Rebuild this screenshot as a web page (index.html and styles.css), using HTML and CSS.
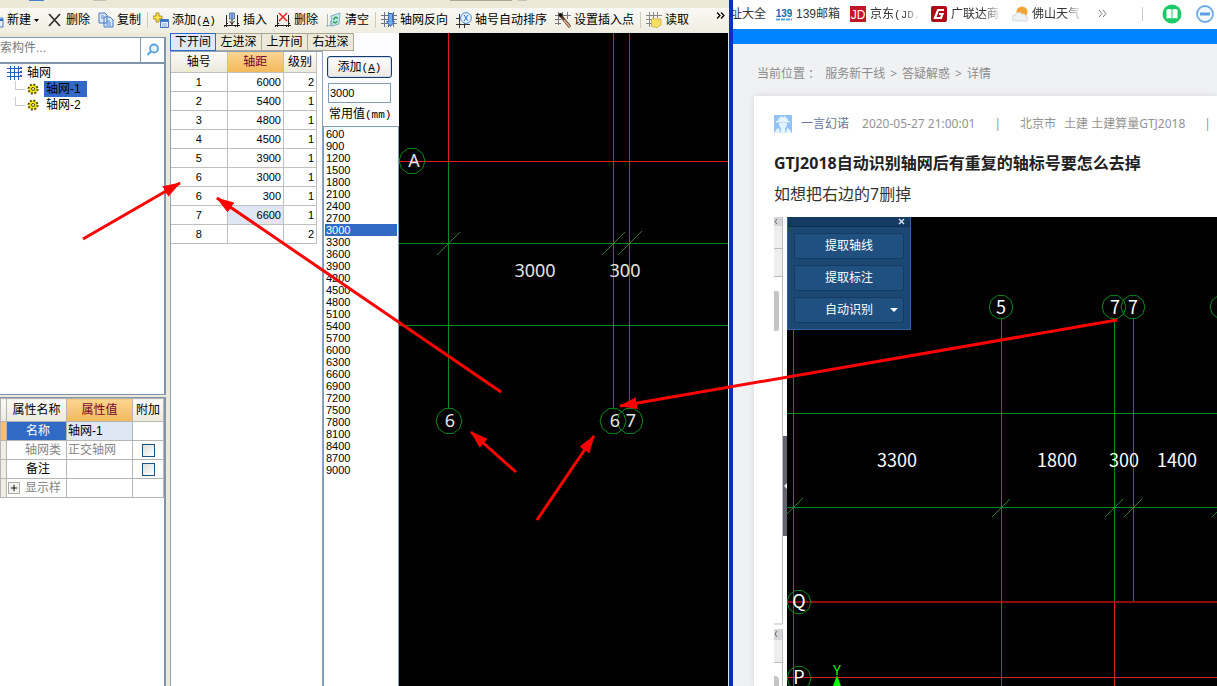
FILE: index.html
```html
<!DOCTYPE html>
<html lang="zh-CN">
<head>
<meta charset="utf-8">
<title>轴网</title>
<link rel="stylesheet" href="styles.css">
</head>
<body>
<div class="desktop">
  <section class="app">
    <div class="upper-strip"><i class="strip-blue"></i><i class="strip-grey"></i><i class="strip-combo"></i><i class="strip-dot"></i></div>
    <div class="toolbar">
      <button class="tool"><svg class="icon-cut" viewBox="0 0 4 16"><path d="M0 6h3v9H0" fill="#e8f1ff" stroke="#4a78c0"/><path d="M0 7h3v2H0z" fill="#356bc4"/></svg>新建<svg class="caret" viewBox="0 0 5 3"><path d="M0 0h5L2.500 3z"/></svg></button>
      <button class="tool"><svg class="icon" viewBox="0 0 16 16"><path d="M2 2l11 12M13 2L2 14" stroke="#333" stroke-width="1.800" fill="none"/></svg>删除</button>
      <button class="tool"><svg class="icon" viewBox="0 0 16 16"><path d="M1 1h6l2 2v8H1zM6 5h6l3 3v7H6z" fill="#d8e8fc" stroke="#4778bd"/><path d="M3 4h3M3 6h3M8 9h4M8 11h5M8 13h5" stroke="#5b90dc"/></svg>复制</button>
      <i class="sep"></i>
      <button class="tool"><svg class="icon" viewBox="0 0 16 16"><path d="M3 1h3v3h3v3H6v3H3V7H0V4h3z" fill="#ffe04d" stroke="#9a7c18" stroke-width=".8"/><path d="M7.500 7.500h8v8h-8z" fill="#e7f0ff" stroke="#4775bc"/><path d="M8 8h7v2H8z" fill="#3f78cf"/><path d="M9 12h5M9 14h5" stroke="#8aa9d8"/></svg><span>添加<span class="mono">(<u>A</u>)</span></span></button>
      <button class="tool"><svg class="icon" viewBox="0 0 16 16"><path d="M2.500 3v12M13.500 3v12M0 13.500h16M8 6v8" stroke="#222"/><path d="M5.500 1h5v6h-5z" fill="#9fc2f2" stroke="#55749e"/><path d="M8 2v4" stroke="#204a9a"/><path d="M5.500 9L8 12l2.500-3M0 15l4-4M11 15l4-4" fill="none" stroke="#222"/></svg>插入</button>
      <button class="tool"><svg class="icon" viewBox="0 0 16 16"><path d="M2.500 3v12M13.500 3v12M0 13.500h16M0 15l4-4M11 15l4-4" stroke="#222"/><path d="M4 1l8 8M12 1L4 9" stroke="#e02a2a" stroke-width="1.600"/></svg>删除</button>
      <button class="tool"><svg class="icon" viewBox="0 0 16 16"><path d="M1.500 2v13M4.500 9v6M0 13.500h9" stroke="#9ab7cf"/><path d="M5 4l9-3-1 11-7 2z" fill="#c7e6ef" stroke="#82aebf"/><path d="M8 8c0-4 4-3 3-1M11 9c-1 3-4 2-3 0" fill="none" stroke="#27a653" stroke-width="1.500"/></svg>清空</button>
      <i class="sep"></i>
      <button class="tool"><svg class="icon" viewBox="0 0 16 16"><path d="M3.500 0v15M7.500 0v15M12.500 0v15M0 3.500h16M0 7.500h16M0 11.500h16" stroke="#6b7480"/><path d="M7.500 1.500h4v8h2l-4 5-4-5h2z" fill="#74aaf0" stroke="#386cba"/></svg>轴网反向</button>
      <button class="tool"><svg class="icon" viewBox="0 0 16 16"><path d="M3.500 2v14M8.500 10v6M0 6.500h4M0 12.500h14" stroke="#333"/><circle cx="10" cy="6" r="5.400" fill="#e3f0ff" stroke="#4b8ad4"/><path d="M8 3l4 6M12 3L8 9" stroke="#2e73c4"/></svg>轴号自动排序</button>
      <button class="tool"><svg class="icon" viewBox="0 0 16 16"><path d="M3.500 0v13M7.500 0v7M12.500 0v7M0 3.500h16M0 7.500h6M0 11.500h6" stroke="#777"/><path d="M6 4l9 11" stroke="#5b4030" stroke-width="3"/><path d="M9 8l6 7" stroke="#e4b08a" stroke-width="1.600"/><circle cx="5.500" cy="3" r="2" fill="#111"/></svg>设置插入点</button>
      <i class="sep"></i>
      <button class="tool"><svg class="icon" viewBox="0 0 16 16"><path d="M3.500 0v15M7.500 0v8M11.500 0v6M0 3.500h16M0 7.500h8M0 11.500h6" stroke="#888"/><path d="M5.500 7l3-1 1 1h5.500v6l-4 2.500-5.500-1z" fill="#f7df61" stroke="#c3a43a" stroke-width=".7"/></svg>读取</button>
      <button class="overflow" aria-label="更多"><svg viewBox="0 0 9 7"><path d="M1 .5l3 3-3 3M5 .5l3 3-3 3" fill="none" stroke="#000" stroke-width="1.300"/></svg></button>
    </div>

    <div class="workspace">
      <aside class="side">
        <div class="tree-pane">
          <div class="search"><input type="text" aria-label="搜索构件" placeholder="索构件..."><button aria-label="搜索"><svg viewBox="0 0 14 14"><circle cx="8" cy="5.500" r="4" fill="#e6f4ff" stroke="#5aa2dc" stroke-width="1.800"/><path d="M5 8.500L1.500 12" stroke="#5aa2dc" stroke-width="2.200"/></svg></button></div>
          <ul class="tree">
            <li class="root"><svg class="grid-icon" viewBox="0 0 16 16"><path d="M3.500 1v14M7.500 1v14M11.500 1v14M0 3.500h14M0 7.500h14M0 11.500h14" stroke="#2c5faf"/><path d="M14 2v2M14 6v2M14 10v2" stroke="#2c5faf" stroke-width="2"/></svg>轴网</li>
            <li class="leaf"><svg class="gear" viewBox="0 0 12 12"><circle cx="6" cy="6" r="4.500" fill="#f5e600" stroke="#5c5600" stroke-width="2" stroke-dasharray="2 1.500"/><circle cx="6" cy="6" r="1.500" fill="#fff" stroke="#555000"/></svg><span class="selected">轴网-1</span></li>
            <li class="leaf"><svg class="gear" viewBox="0 0 12 12"><circle cx="6" cy="6" r="4.500" fill="#f5e600" stroke="#5c5600" stroke-width="2" stroke-dasharray="2 1.500"/><circle cx="6" cy="6" r="1.500" fill="#fff" stroke="#555000"/></svg><span>轴网-2</span></li>
          </ul>
        </div>
        <div class="prop-pane">
          <table class="props">
            <colgroup><col class="p-mark"><col class="p-name"><col class="p-value"><col class="p-extra"></colgroup>
            <tr class="head"><th></th><th>属性名称</th><th class="hot">属性值</th><th>附加</th></tr>
            <tr><td class="current"></td><td class="name picked">名称</td><td class="pale">轴网-1</td><td></td></tr>
            <tr class="dim"><td class="mark"></td><td class="name">轴网类</td><td>正交轴网</td><td class="check"><input type="checkbox" aria-label="轴网类 附加"></td></tr>
            <tr><td class="mark"></td><td class="name">备注</td><td></td><td class="check"><input type="checkbox" aria-label="备注 附加"></td></tr>
            <tr class="dim"><td class="mark"></td><td class="name"><button class="expand" aria-label="展开"><svg viewBox="0 0 11 11"><path d="M2 5.500h7M5.500 2v7" stroke="#000"/></svg></button>显示样</td><td></td><td></td></tr>
          </table>
        </div>
      </aside>

      <div class="editor">
        <div class="tabs"><button class="tab active">下开间</button><button class="tab">左进深</button><button class="tab">上开间</button><button class="tab">右进深</button></div>
        <div class="editor-body">
          <div class="axis-pane">
            <table class="axis">
              <tr><th>轴号</th><th class="hot">轴距</th><th>级别</th></tr>
              <tr><td>1</td><td>6000</td><td>2</td></tr>
              <tr><td>2</td><td>5400</td><td>1</td></tr>
              <tr><td>3</td><td>4800</td><td>1</td></tr>
              <tr><td>4</td><td>4500</td><td>1</td></tr>
              <tr><td>5</td><td>3900</td><td>1</td></tr>
              <tr><td>6</td><td>3000</td><td>1</td></tr>
              <tr><td>6</td><td>300</td><td>1</td></tr>
              <tr><td>7</td><td class="pale">6600</td><td>1</td></tr>
              <tr><td>8</td><td></td><td>2</td></tr>
            </table>
          </div>
          <div class="values">
            <div class="value-form">
              <button class="add">添加<span class="mono">(<u>A</u>)</span></button>
              <input id="common" type="text" value="3000">
              <label for="common">常用值<span class="mono">(mm)</span></label>
            </div>
            <ul class="list">
              <li>600</li><li>900</li><li>1200</li><li>1500</li><li>1800</li><li>2100</li><li>2400</li><li>2700</li><li class="on">3000</li><li>3300</li><li>3600</li><li>3900</li><li>4200</li><li>4500</li><li>4800</li><li>5100</li><li>5400</li><li>5700</li><li>6000</li><li>6300</li><li>6600</li><li>6900</li><li>7200</li><li>7500</li><li>7800</li><li>8100</li><li>8400</li><li>8700</li><li>9000</li>
            </ul>
          </div>
        </div>
      </div>

      <svg class="cad cad-left">
        <defs><polygon id="bubble" points="13,0 10.500,7.600 4,12.400 -4,12.400 -10.500,7.600 -13,0 -10.500,-7.600 -4,-12.400 4,-12.400 10.500,-7.600"/></defs>
        <g transform="translate(-399 -33)">
          <path class="green line" d="M448.500 161V408M613.500 161V408M629.500 161V408M399 243.500H2000M399 325.500H2000"/>
          <path class="red line" d="M448.500 33V161M613.500 33V161M629.500 33V161M399 161.500H2000"/>
          <path class="green slash" d="M437 255l23-23M602 255l23-23M618 255l24-24"/>
          <use href="#bubble" class="ring" x="412" y="161"/><use href="#bubble" class="ring" x="449" y="421"/><use href="#bubble" class="ring" x="613" y="421"/><use href="#bubble" class="ring" x="630" y="421"/>
          <g class="cad-text"><text x="414" y="167">A</text><text x="535" y="277">3000</text><text x="625" y="277">300</text><text x="450" y="427">6</text><text x="615" y="427">6</text><text x="631" y="427">7</text></g>
        </g>
      </svg>
    </div>
  </section>

  <section class="browser">
    <nav class="bookmarks">
      <a href="#" class="first">址大全</a>
      <a href="#"><svg class="fav" viewBox="0 0 16 16"><text x="8" y="11" class="logo139">139</text><path d="M0 13.500h16" stroke="#54a6dc" stroke-width="2" stroke-dasharray="4 1"/></svg><span>139邮箱</span></a>
      <a href="#"><svg class="fav" viewBox="0 0 16 16"><path fill="#c01625" d="M0 0h16v16H0z"/><text x="8" y="13" class="logojd">JD</text></svg><span class="fade">京东<span class="mono">(JD.</span></span></a>
      <a href="#"><svg class="fav" viewBox="0 0 16 16"><rect width="16" height="16" rx="2" fill="#ad0d18"/><path d="M13 4H7L4 12h6l1.500-4H8" fill="none" stroke="#fff" stroke-width="2.200"/></svg><span class="fade">广联达商</span></a>
      <a href="#"><svg class="fav" viewBox="0 0 16 16"><circle cx="10" cy="6" r="5.500" fill="#f6a42f"/><path d="M3 15a3 3 0 0 1 0-6 4 4 0 0 1 7-1 3 3 0 0 1 4 3 2 2 0 0 1 0 4z" fill="#eef2f5" stroke="#c2cbd3" stroke-width=".7"/></svg><span class="fade">佛山天气</span></a>
      <button class="more" aria-label="更多书签"><svg viewBox="0 0 9 9"><path d="M1 1l3 3.500L1 8M5 1l3 3.500L5 8" fill="none" stroke="#777"/></svg></button>
      <i class="divider"></i>
      <button class="round" aria-label="阅读"><svg viewBox="0 0 20 20"><circle cx="10" cy="10" r="9.500" fill="#1ccb68"/><path d="M4.500 5.500q3-1 5 0v9q-2-1-5 0zM15.500 5.500q-3-1-5 0v9q2-1 5 0z" fill="#fff"/></svg></button>
      <button class="round" aria-label="屏蔽"><svg viewBox="0 0 20 20"><circle cx="10" cy="10" r="8" fill="#f3f9ff" stroke="#6fabe9" stroke-width="1.800"/><path d="M5 10h10" stroke="#5d9fe4" stroke-width="3"/></svg></button>
    </nav>
    <div class="blue-bar"></div>
    <main class="page">
      <div class="crumbs"><span>当前位置 ：</span><a href="#">服务新干线</a><span>&gt;</span><a href="#">答疑解惑</a><span>&gt;</span><a href="#">详情</a></div>
      <article class="card">
        <div class="meta">
          <svg class="avatar" viewBox="0 0 18 18"><rect width="18" height="18" rx="1" fill="#8fc3f8"/><path d="M4 5q1-3 5-3t5 3v1H4zM2 6h14v1.500H2zM5 8h8q0 4-2 5l.5 5h-5L7 13q-2-1-2-5M1 18q0-4 4-5l1 5zM17 18q0-4-4-5l-1 5z" fill="#e5f3ff"/><path d="M7 1v4M11 1v4" stroke="#e5f3ff"/></svg>
          <a href="#" class="author">一言幻诺</a><time>2020-05-27 21:00:01</time><span class="bar">|</span><span class="city">北京市</span><span>土建 土建算量GTJ2018</span><span class="bar">|</span>
        </div>
        <h1>GTJ2018自动识别轴网后有重复的轴标号要怎么去掉</h1>
        <p>如想把右边的7删掉</p>
        <div class="figure">
          <svg class="rail">
            <path fill="#d5d5d8" d="M0 0h9v9H0zM0 412h9v11H0z"/><path fill="#eee" d="M0 9h9v50H0zM0 423h9v22H0z"/>
            <path d="M3 2L1 4.500 3 7M3 414l-2 3 2 3" fill="none" stroke="#666"/>
            <path d="M8.500 0v407H0M0 31.500h9M0 59.500h9M8.500 412v60M0 445.500h9" fill="none" stroke="#bcbcc0"/>
            <path fill="#c4c4c6" d="M0 74h3q2 0 2 3v34q0 3-2 3H0zM0 459q5 0 5 4v20H0z"/>
            <path fill="#62656f" d="M9 219h4v100H9z"/><path fill="#eee" d="M13 266v6l-3-3z"/>
          </svg>
          <div class="shot">
            <svg class="cad">
              <defs><polygon id="bubble-small" points="12,0 9.700,7 3.700,11.400 -3.700,11.400 -9.700,7 -12,0 -9.700,-7 -3.700,-11.400 3.700,-11.400 9.700,-7"/></defs>
              <g transform="translate(-787 -217)">
                <path class="green line" d="M793.500 217V602M1001.500 319V602M1114.500 319V602M1133.500 319V602M787 413.500H3000M787 507.500H3000"/>
                <path class="red dark" d="M787 602H3000"/>
                <path class="red line" d="M793.500 602V2000M1001.500 602V2000M1114.500 602V2000M787 677.500H3000"/>
                <path class="green slash" d="M785 516l18-18M992 517l18-18M1105 517l18-18M1124 517l18-18M1212 517l18-18"/>
                <use href="#bubble-small" class="ring" x="1001" y="307"/><use href="#bubble-small" class="ring" x="1114" y="307"/><use href="#bubble-small" class="ring" x="1133" y="307"/><use href="#bubble-small" class="ring" x="1222" y="307"/><use href="#bubble-small" class="ring" x="799" y="602"/><use href="#bubble-small" class="ring" x="799" y="678"/>
                <g class="cad-text bright"><text x="1001" y="314">5</text><text x="1115" y="314">7</text><text x="1133" y="314">7</text><text x="897" y="467">3300</text><text x="1057" y="467">1800</text><text x="1124" y="467">300</text><text x="1177" y="467">1400</text><text x="799" y="608">Q</text><text x="799" y="684">P</text></g>
                <text class="axis-y" x="837" y="675">Y</text><path d="M837 675l5 14h-10z" fill="#0f0"/>
              </g>
            </svg>
            <div class="palette">
              <div class="palette-head"><button aria-label="关闭"><svg viewBox="0 0 7 7"><path d="M1 1l5 5M6 1L1 6" stroke="#dce8f4" stroke-width="1.300"/></svg></button></div>
              <div class="palette-body"><button>提取轴线</button><button>提取标注</button><button>自动识别<svg class="drop" viewBox="0 0 8 4"><path d="M0 0h8L4 4z" fill="#fff"/></svg></button></div>
            </div>
          </div>
        </div>
      </article>
    </main>
  </section>

  <svg class="arrows">
    <defs><marker id="head" markerUnits="userSpaceOnUse" markerWidth="18" markerHeight="12" refX="17" refY="6" orient="auto"><path d="M0 0l18 6-18 6z" fill="red"/></marker></defs>
    <g class="arrow"><path d="M83 239L180 183"/><path d="M501 392L217 198"/><path d="M516 472L471 432"/><path d="M537 520L594 436"/><path d="M1117 320L620 406"/></g>
  </svg>
</div>
</body>
</html>
```

FILE: styles.css
```css
* { box-sizing: border-box; }
body { margin: 0; font: 12px/16px "Liberation Sans", "Noto Sans CJK SC", sans-serif; color: #000; }
button { font: inherit; color: inherit; padding: 0; border: 0; background: none; white-space: nowrap; }
a { color: inherit; text-decoration: none; }
ul { margin: 0; padding: 0; list-style: none; }
svg { display: block; flex-shrink: 0; }
table { border-collapse: collapse; table-layout: fixed; }
.mono { font-family: "Liberation Mono", monospace; font-size: 11px; line-height: 1; }

.desktop { position: relative; display: grid; grid-template-columns: 733fr 484fr; height: 100vh; overflow: hidden; }
.arrows { position: absolute; inset: 0; width: 100%; height: 100%; pointer-events: none; }
.arrow { fill: none; stroke: #f00; stroke-width: 3; }
.arrow path { marker-end: url(#head); }

/* modelling application */
.app { display: flex; flex-direction: column; min-width: 0; overflow: hidden; background: #ece9d8; border-right: 4px solid #0a2fc4; box-shadow: inset -1px 0 #dbe7ff; }
.upper-strip { display: flex; height: 2px; flex: none; }
.upper-strip i { height: 1px; }
.strip-blue { width: 15px; margin-left: 29px; background: #4c82c8; }
.strip-grey { width: 13px; margin-left: 49px; background: #c5c2b5; }
.strip-combo { width: 62px; margin-left: 344px; background: #aaa797; }
.strip-dot { width: 9px; margin-left: 6px; background: #c5c2b5; }
.toolbar { display: flex; align-items: center; gap: 8px; flex: none; height: 25px; margin-top: 6px; padding-bottom: 1px; background: linear-gradient(#faf9f5, #efede0); }
.tool { display: flex; align-items: center; gap: 3px; }
.icon { width: 16px; height: 16px; }
.icon-cut { width: 4px; height: 16px; }
.caret { width: 5px; height: 3px; }
.sep { width: 1px; height: 16px; margin: 0 -3px 0 -2px; background: #cfccba; }
.overflow { align-self: flex-start; margin: 4px 4px 0 auto; }
.overflow svg { width: 9px; height: 7px; }

.workspace { display: flex; flex: 1; min-height: 0; }
.side { display: flex; flex-direction: column; gap: 2px; flex: 0 0 166px; padding-top: 4px; margin-right: 4px; }
.tree-pane, .prop-pane { background: #fff; border: solid #7f94ad; border-width: 1px 2px 1px 0; }
.tree-pane { height: 358px; flex: none; }
.prop-pane { flex: 1; overflow: hidden; border-bottom: 0; }
.search { display: flex; height: 26px; border-bottom: 2px solid #7f94ad; }
.search input { width: 141px; padding: 0 0 4px; border: 0; border-right: 1px solid #7f9db9; font: inherit; }
.search input::placeholder { color: #777; }
.search button { flex: 1; display: grid; place-items: center; }
.search svg { width: 14px; height: 14px; }
.tree { padding: 1px 0 0 7px; }
.tree li { display: flex; align-items: center; height: 16px; gap: 4px; }
.grid-icon { width: 16px; height: 16px; }
.tree .leaf { padding-left: 20px; gap: 5px; background: linear-gradient(#ccc, #ccc) 8px 8px / 10px 1px no-repeat, linear-gradient(#ccc, #ccc) 8px 0 / 1px 8px no-repeat; }
.gear { width: 12px; height: 12px; }
.leaf span { padding: 0 6px 0 2px; line-height: 16px; }
.leaf .selected { background: #316ac5; }

th { padding: 0; font-weight: normal; background: linear-gradient(#fbfaf6, #ece9dc); }
.hot { color: #7a0030; background: linear-gradient(#fbd592, #f2b95a); }
.pale { background: #dfe7f4; }
.props { width: 164px; }
.p-mark { width: 6px; }
.p-name { width: 60px; }
.p-value { width: 66px; }
.props td, .props th { height: 19px; padding: 0; border: 1px solid #b5b5b5; line-height: 16px; white-space: nowrap; }
.props th { height: 23px; }
.props td { padding-left: 1px; }
.props .name { padding-left: 18px; }
.props .picked { color: #fff; background: #316ac5; }
.props .current { background: #f7bd70; }
.props .mark { background: #f0eee2; }
.dim { color: #858585; }
.props .check { padding: 0; }
.check input { appearance: none; display: block; width: 13px; height: 13px; margin: 0 auto; border: 1px solid #1c5180; background: linear-gradient(135deg, #dcdcd7, #fff); }
.props .picked, .props tr:nth-child(4) .name { text-align: center; padding: 0 0 0 3px; }
.expand { float: left; width: 12px; height: 12px; margin: 2px 0 0 -17px; border: 1px solid #aaa; background: #f3f2ed; }
.expand svg { width: 10px; height: 10px; }

.editor { display: flex; flex-direction: column; flex: 0 0 229px; background: #fdfdff; }
.tabs { display: flex; flex: none; height: 18px; }
.tab { width: 46px; border: 1px solid #aca899; border-left-width: 0; background: #ece9d8; }
.tab.active { border: 1px solid #316ac5; background: #dfe8f6; }
.editor-body { display: flex; flex: 1; min-height: 0; }
.axis-pane { flex: 0 0 153px; background: #fff; border: solid #8ca2bf; border-width: 1px 1px 0; }
.axis { width: 146px; }
.axis th, .axis td { height: 19px; border: 1px solid #c0c0c0; border-left: 0; line-height: 16px; }
.axis tr:first-child th { border-top: 0; }
.axis th { height: 20px; }
.axis th:nth-child(3) { width: 33px; }
.axis td { padding: 0 2px; font-size: 11px; text-align: right; }
.axis td:first-child { text-align: center; }
.values { display: flex; flex-direction: column; flex: 1; min-width: 0; }
.value-form { display: flex; flex-direction: column; flex: none; height: 75px; padding: 5px 7px 0 4px; }
.add { height: 22px; border: 1px solid #173d6f; border-radius: 3px; background: linear-gradient(#fff, #ece9e0); box-shadow: inset 0 0 0 1px #cfdcf0; }
.value-form input { width: 63px; height: 20px; margin: 5px 1px 3px; padding: 0 1px; border: 1px solid #7f9db9; font: inherit; font-size: 11px; }
.value-form label { padding-left: 2px; white-space: nowrap; }
.list { flex: 1; padding: 1px; border: 1px solid #7f9db9; border-bottom: 0; background: #fff; font-size: 11px; line-height: 12px; }
.list li { padding-left: 1px; }
.list .on { color: #fff; background: #316ac5; }

/* drawing surfaces */
.cad { display: block; background: #000; }
.cad-left { flex: 1; min-width: 0; height: 100%; margin-right: 1px; }
.green, .ring { fill: none; stroke: #0b8a1c; }
.line { shape-rendering: crispEdges; }
.slash { stroke: #247c2c; }
.red { fill: none; stroke: #e01c1c; }
.dark { stroke: #8c0d10; stroke-width: 2; }
.cad-text { fill: #e4e4e4; font: 18px "Noto Sans", sans-serif; text-anchor: middle; }
.bright { fill: #fff; font-family: "Noto Sans CJK SC", sans-serif; }
.axis-y { fill: #0f0; font: 14px "Noto Sans", sans-serif; text-anchor: middle; }

/* browser */
.browser { display: flex; flex-direction: column; min-width: 0; overflow: hidden; background: #fff; font-family: "Noto Sans", "Noto Sans CJK SC", sans-serif; }
.bookmarks { display: flex; align-items: center; gap: 10px; flex: none; height: 29px; padding-bottom: 2px; color: #333; font-family: "Liberation Sans", "Noto Sans CJK SC", sans-serif; white-space: nowrap; }
.bookmarks a { display: flex; align-items: center; gap: 4px; }
.bookmarks .first { width: 33px; justify-content: flex-end; overflow: hidden; }
.fav { width: 16px; height: 16px; }
.fade { width: 51px; -webkit-mask-image: linear-gradient(90deg, #000 65%, transparent); mask-image: linear-gradient(90deg, #000 65%, transparent); }
.logo139 { fill: #1768ad; font: bold 10px "Liberation Sans", sans-serif; text-anchor: middle; }
.logojd { fill: #fff; font: 12px "Liberation Sans", sans-serif; text-anchor: middle; }
.more { margin-left: 5px; }
.more svg { width: 9px; height: 9px; }
.divider { width: 1px; height: 14px; margin-left: 25px; background: #ccc; }
.round { margin-left: 9px; }
.round + .round { margin-left: 3px; }
.round svg { width: 20px; height: 20px; }
.blue-bar { flex: none; height: 15px; background: #0084ff; }
.page { display: flex; flex-direction: column; flex: 1; min-height: 0; padding-left: 21px; background: #f0f1f3; }
.crumbs { display: flex; gap: 5px; flex: none; height: 52px; padding: 22px 0 0 3px; color: #8c8c8c; }
.card { display: flex; flex-direction: column; flex: 1; min-height: 0; padding: 16px 0 0 20px; background: #fff; box-shadow: 0 0 6px #d5d6d9; }
.meta { display: flex; align-items: center; flex: none; height: 24px; color: #939393; white-space: nowrap; }
.avatar { width: 18px; height: 18px; margin-right: 9px; }
.author { margin-right: 13px; color: #66759a; }
.bar { margin: 0 19px; }
.city { margin-right: 8px; }
h1 { margin: 15px 0 0; font-size: 16px; line-height: 24px; color: #222; white-space: nowrap; }
p { margin: 7px 0 11px; font-size: 16px; line-height: 24px; color: #333; }
.figure { display: flex; flex: 1; min-height: 0; }
.rail { width: 13px; height: 100%; }
.shot { position: relative; flex: 1; min-width: 0; }
.shot .cad { width: 100%; height: 100%; }
.palette { position: absolute; left: 0; top: 0; width: 124px; border: 1px solid #2c63a0; border-top: 0; background: #1c4773; color: #fff; }
.palette-head { display: flex; justify-content: flex-end; height: 10px; padding: 1px 5px; background: #153a61; border-bottom: 1px solid #102f50; }
.palette-head svg { width: 7px; height: 7px; }
.palette-body { display: flex; flex-direction: column; gap: 6px; padding: 6px; }
.palette-body button { position: relative; height: 26px; border: 1px solid #153a61; border-radius: 2px; background: #1f5080; }
.drop { position: absolute; right: 5px; top: 10px; width: 8px; height: 4px; }
```
